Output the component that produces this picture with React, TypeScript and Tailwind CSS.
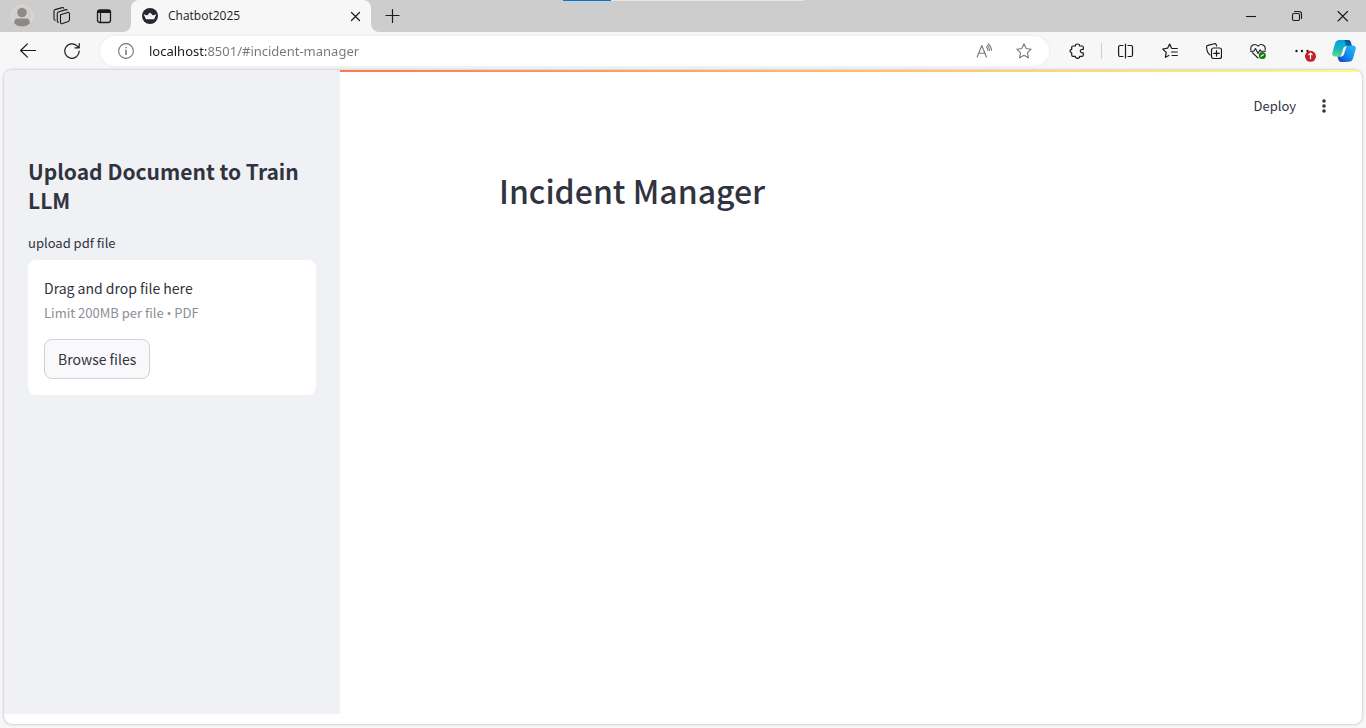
import type { ReactNode } from "react";

type IconButtonProps = { label: string; className?: string; children: ReactNode };

function IconButton({ label, className = "", children }: IconButtonProps) {
  return (
    <button
      type="button"
      aria-label={label}
      className={`flex shrink-0 items-center justify-center text-[#1b1b1b] ${className}`}
    >
      {children}
    </button>
  );
}

function Glyph({ children, className = "size-4", box = 16 }: { children: ReactNode; className?: string; box?: number }) {
  return (
    <svg
      viewBox={`0 0 ${box} ${box}`}
      className={className}
      fill="none"
      stroke="currentColor"
      strokeWidth="1.1"
      strokeLinecap="round"
      strokeLinejoin="round"
      aria-hidden="true"
    >
      {children}
    </svg>
  );
}

function Avatar() {
  return (
    <svg viewBox="0 0 22 22" className="size-[22px]" aria-hidden="true">
      <circle cx="11" cy="11" r="10.5" fill="#d2d0ce" stroke="#dddcda" />
      <circle cx="11" cy="7.6" r="4.7" fill="#8d8986" />
      <path d="M3.2 18.4v-1.2c0-2.2 1.4-3.7 3.5-3.7h8.6c2.1 0 3.5 1.5 3.5 3.7v1.2A10.6 10.6 0 0 1 11 21.5a10.6 10.6 0 0 1-7.8-3.1z" fill="#8d8986" />
    </svg>
  );
}

function Crown() {
  return (
    <svg viewBox="0 0 16 16" className="size-4" aria-hidden="true">
      <circle cx="8" cy="8" r="8" fill="#262730" />
      <path d="M1.7 6.2 5 7.5 8 4.5l3 3 3.3-1.3-2.3 5.1H4z" fill="#fff" />
      <path d="M4.3 8.8 5.6 10 8 6.5l2.4 3.5 1.3-1.2" fill="none" stroke="#b9bac0" strokeWidth=".5" />
    </svg>
  );
}

function Copilot() {
  return (
    <svg viewBox="0 0 24 22" className="h-[22px] w-6" aria-hidden="true">
      <defs>
        <linearGradient id="cpTop" x1="0.3" y1="0" x2="0.2" y2="1">
          <stop offset="0" stopColor="#0a9fd8" />
          <stop offset="0.5" stopColor="#16b3c4" />
          <stop offset="1" stopColor="#5ddc86" />
        </linearGradient>
        <linearGradient id="cpBottom" x1="1" y1="0" x2="0" y2="1">
          <stop offset="0" stopColor="#29c0f2" />
          <stop offset="0.5" stopColor="#168df0" />
          <stop offset="1" stopColor="#1537c8" />
        </linearGradient>
      </defs>
      <path d="M12 0h4.200c1.300 0 2.200.9 2.600 2.200L19.800 6h-3.300c-1.700 0-2.700 1-3.200 2.600L11.600 15c-.4 1.200-1 1.500-2 1.500H3c-2.300 0-3.200-1.500-2.600-3.700L3 3.500C3.700 1.200 5 0 7.300 0z" fill="url(#cpTop)" />
      <path d="M12 0h4.200c1.300 0 2.200.9 2.600 2.200L19.800 6h-3.300c-1.800 0-2.500-.6-2.900-2.200C13.200 2 13 .6 12 0z" fill="#075d9e" />
      <path d="M12 22H9c-1.300 0-2.200-.9-2.600-2.200l-1-3.300h3.900c1.500 0 2.200-.9 2.600-2.200l2-6.100c.5-1.500 1.300-2.700 3-2.700H21c2.300 0 3.300 1.500 2.700 3.700l-2.600 9c-.7 2.400-2.100 3.600-4.400 3.600z" fill="url(#cpBottom)" />
      <path d="M14.600 6.200c-1.800 0-3 .9-3.500 2.600l-1.600 5.600c-.2.900-.6 1.500-1.200 2 1.800 0 3-.5 3.500-2.200l1.700-5.700c.3-1.100.6-1.700 1.500-2.200z" fill="#f7f7f7" />
    </svg>
  );
}

function TabStrip() {
  return (
    <header className="relative flex h-8 shrink-0 items-stretch bg-[#f7f7f7] font-['Open_Sans','Noto_Sans',sans-serif]">
      <div className="flex w-[131px] shrink-0 items-center gap-5 rounded-br-lg bg-[#cdcdcd] pl-[11px]">
        <IconButton label="Profile"><Avatar /></IconButton>
        <IconButton label="Workspaces">
          <Glyph className="size-[18px]" box={18}>
            <path d="m7.500 7.700 7.200-2.200c1-.3 1.800.3 1.800 1.300v5.800c0 .9-.4 1.500-1.200 1.800l-5.800 2.200c-1.100.4-2-.2-2-1.300z" />
            <path d="M5.500 15.300c-.7 0-1.200-.5-1.200-1.300V6.300c0-.7.4-1.200 1-1.400l7.400-2.300c.6-.2 1.100 0 1.400.5" />
            <path d="M2.300 13.200c-.8 0-1.300-.6-1.300-1.400V4c0-.7.4-1.200 1.100-1.400l7-2c.7-.2 1.200 0 1.600.5" />
          </Glyph>
        </IconButton>
        <IconButton label="Tab actions" className="ml-[5px]">
          <Glyph>
            <rect x="1.5" y="2" width="13" height="12.5" rx="2.3" strokeWidth="1.3" />
            <path d="M2.500 3.500h11" strokeWidth="2.8" />
            <path d="M4.500 5v9.500" />
          </Glyph>
        </IconButton>
      </div>
      <div className="bg-[#cdcdcd]">
        <div className="flex h-full w-60 items-center rounded-t-lg bg-[#f7f7f7] pr-2 pl-[11px]">
          <Crown />
          <span className="ml-[10px] flex-1 text-xs text-[#1b1b1b]">Chatbot2025</span>
          <IconButton label="Close tab" className="size-4">
            <Glyph><path d="m4.500 4.500 8 8M12.500 4.500l-8 8" strokeWidth="1.2" /></Glyph>
          </IconButton>
        </div>
      </div>
      <div className="flex flex-1 items-center rounded-bl-lg bg-[#cdcdcd] pl-[13px]">
        <IconButton label="New tab">
          <Glyph><path d="M8.500 1.500v13M2 7.500h13" strokeWidth="1.2" /></Glyph>
        </IconButton>
      </div>
      <div className="flex items-center bg-[#cdcdcd]">
        <IconButton label="Minimize" className="w-[46px]">
          <Glyph><path d="M3 8.500h10" strokeLinecap="butt" /></Glyph>
        </IconButton>
        <IconButton label="Restore" className="w-[46px]">
          <Glyph>
            <rect x="3.500" y="5.500" width="7" height="7" rx="1.2" />
            <path d="M5.500 3.500h4.500a2.500 2.500 0 0 1 2.500 2.500v4.500" />
          </Glyph>
        </IconButton>
        <IconButton label="Close window" className="w-[46px]">
          <Glyph><path d="m3 3.500 9.500 9.500M12.500 3.500 3 13" /></Glyph>
        </IconButton>
      </div>
      <div className="absolute inset-x-0 top-0 flex justify-center" aria-hidden="true">
        <div className="flex h-px w-[241px] bg-[#e6e6e6]"><div className="w-12 bg-[#0078d7]" /></div>
      </div>
    </header>
  );
}

function Toolbar() {
  return (
    <nav className="flex h-[38px] shrink-0 items-center bg-[#f7f7f7] pr-[10px] pl-5" aria-label="Browser toolbar">
      <IconButton label="Back">
        <Glyph><path d="M.6 7.500h15M7.400.9.6 7.500l6.800 6.600" strokeWidth="1.2" /></Glyph>
      </IconButton>
      <IconButton label="Refresh" className="ml-7">
        <Glyph><path d="M15.200 8A7.200 7.200 0 1 1 13 2.900l1.600 1.500M15.200.6v4.200H11" strokeWidth="1.2" /></Glyph>
      </IconButton>
      <form className="ml-5 flex h-[30px] flex-1 items-center rounded-full bg-white pr-[17px] pl-[18px] shadow-[0_0_3px_rgba(0,0,0,0.08)]">
        <IconButton label="Site information">
          <Glyph className="size-4 text-[#737373]">
            <circle cx="8" cy="8" r="7.4" />
            <path d="M8 7.300v4.300M8 4.600v.2" strokeWidth="1.5" />
          </Glyph>
        </IconButton>
        <input
          type="text"
          aria-label="Address"
          defaultValue="localhost:8501/#incident-manager"
          className="ml-[15px] h-5 min-w-0 flex-1 bg-[linear-gradient(90deg,#1b1b1b_57px,#767676_57px)] bg-clip-text font-['Noto_Sans','Open_Sans',sans-serif] text-[13px] text-transparent outline-none"
        />
        <IconButton label="Read aloud">
          <Glyph className="size-4 text-[#777777]">
            <path d="m1.200 14 4.600-11.500L10.400 14M2.800 10.200h6M10.500 4.200c1 .9 1.500 2 1.400 3.300M11.300 2.400c1.500 1.300 2.300 3 2.300 5M12.200.8c2 1.600 3.200 3.700 3.300 6.400" />
          </Glyph>
        </IconButton>
        <IconButton label="Add to favorites" className="ml-6">
          <Glyph className="size-4 text-[#777777]">
            <path d="m8 .9 2.200 4.600 5 .7-3.700 3.500.9 5L8 12.300l-4.400 2.400.9-5L.8 6.200l5-.7z" />
          </Glyph>
        </IconButton>
      </form>
      <IconButton label="Extensions" className="ml-5">
        <Glyph>
          <path d="M4 3h2.300c0-1.200.9-2 2.200-2s2.200.8 2.200 2H13c.8 0 1.300.5 1.300 1.300v2.100c-1.900-.2-3 .5-3 1.700s1.100 2 3 1.700v2.200c0 .8-.5 1.300-1.300 1.300h-2.300c0 1.200-.9 2-2.200 2s-2.200-.8-2.200-2H4c-.8 0-1.300-.5-1.300-1.300V9.900C1.600 9.700 1 9 1 8.100s.6-1.600 1.700-1.800v-2C2.700 3.500 3.200 3 4 3z" strokeWidth="1.2" />
        </Glyph>
      </IconButton>
      <div className="ml-4 h-4 w-px bg-[#cfcfcf]" />
      <IconButton label="Split screen" className="ml-4">
        <Glyph><path d="M5 2.500H2A1.500 1.500 0 0 0 .6 4v8A1.500 1.500 0 0 0 2 13.500h3M10 2.500h3A1.500 1.500 0 0 1 14.500 4v8a1.500 1.500 0 0 1-1.500 1.500h-3M7.500 1v14" strokeWidth="1.2" /></Glyph>
      </IconButton>
      <IconButton label="Favorites" className="ml-7">
        <Glyph>
          <path d="M9.500 5.100 7.600 1 5.600 5.200.7 6l3.500 3.400-.8 4.900 3.400-1.800M10 5.500h5.300M9.500 9h5.800M10 12.500h5.300" strokeWidth="1.2" />
        </Glyph>
      </IconButton>
      <IconButton label="Collections" className="ml-7">
        <Glyph>
          <path d="M4 12 2.500 10.300C1.800 9.500 1.500 9 1.200 8L.6 4.300c-.2-1 .3-1.700 1.300-1.900L8.300.7c.9-.2 1.600.1 1.900 1l.4 1.300" />
          <rect x="5.500" y="5" width="10" height="10.5" rx="2" strokeWidth="1.2" />
          <path d="M10.500 7.500v5.600M7.700 10.300h5.600" strokeWidth="1.2" />
        </Glyph>
      </IconButton>
      <IconButton label="Browser essentials" className="ml-7">
        <Glyph>
          <path d="M.9 7C-.2 2.300 4.800-.2 8 3.200c3.200-3.400 8.200-.9 7.100 3.800M2.300 9.700 8 15M.5 8.200h3.300l1.700-2.700 2.500 5 2-3.700 1 1.400h4.300" />
          <circle cx="12.300" cy="12.500" r="3.500" fill="#0f7b10" stroke="none" />
          <path d="m11 13.300 2.400-1.600" stroke="#fff" />
        </Glyph>
      </IconButton>
      <IconButton label="Settings and more" className="ml-7">
        <svg viewBox="0 0 22 22" className="size-[22px]" aria-hidden="true">
          <circle cx="2.5" cy="11" r="1.2" fill="#1b1b1b" />
          <circle cx="8" cy="11" r="1.2" fill="#1b1b1b" />
          <circle cx="13.500" cy="11" r="1.2" fill="#1b1b1b" />
          <circle cx="16.500" cy="16.300" r="5.500" fill="#c42127" />
          <path d="M16.500 19.300v-6M14.500 15.200l2-2 2 2" fill="none" stroke="#fff" strokeWidth="1.2" />
        </svg>
      </IconButton>
      <IconButton label="Copilot" className="ml-4"><Copilot /></IconButton>
    </nav>
  );
}

function Sidebar() {
  return (
    <aside className="mb-[10px] w-[336px] shrink-0 bg-[#f0f1f5] px-6 pt-[87px]">
      <h2 className="text-[21px] leading-[29px] font-bold">Upload Document to Train LLM</h2>
      <label htmlFor="pdf-file" className="mt-[18px] block text-[13px] leading-5">
        upload pdf file
      </label>
      <section className="mt-[7px] rounded-lg bg-white p-4">
        <input id="pdf-file" type="file" accept="application/pdf" className="sr-only" />
        <p className="text-[14px] leading-6">Drag and drop file here</p>
        <p className="mt-[3px] text-[13px] leading-5 text-[#8d8e96]">
          Limit 200MB per file <span className="font-['Open_Sans',sans-serif]">•</span> PDF
        </p>
        <button
          type="button"
          className="mt-4 h-10 rounded-lg border border-[#d0d1d6] bg-[#f9f9fb] px-[13px] text-[14px] leading-6"
        >
          Browse files
        </button>
      </section>
    </aside>
  );
}

export default function App() {
  return (
    <div className="flex h-screen flex-col bg-[#f7f7f7]">
      <TabStrip />
      <Toolbar />
      <div className="mx-1 mb-1 flex min-h-0 flex-1 overflow-hidden rounded-lg bg-white font-['Noto_Sans_CJK_SC',sans-serif] text-[#31333f] shadow-[0_0_3px_rgba(0,0,0,0.3)]">
        <Sidebar />
        <div className="flex min-w-0 flex-1 flex-col">
          <div className="h-[2px] shrink-0 bg-linear-to-r from-[#ff7758] to-[#fffd80]" />
          <div className="flex h-[68px] shrink-0 items-center justify-end gap-5 pr-[30px]">
            <button type="button" className="text-[13px] leading-5">Deploy</button>
            <button type="button" aria-label="Main menu">
              <svg viewBox="0 0 16 16" className="size-4" fill="#31333f" aria-hidden="true">
                <circle cx="8" cy="3" r="1.8" />
                <circle cx="8" cy="8" r="1.8" />
                <circle cx="8" cy="13" r="1.8" />
              </svg>
            </button>
          </div>
          <main className="mx-auto w-full max-w-[736px] px-4 pt-6">
            <h1 className="text-[32px] leading-[53px] font-medium">Incident Manager</h1>
          </main>
        </div>
      </div>
    </div>
  );
}
